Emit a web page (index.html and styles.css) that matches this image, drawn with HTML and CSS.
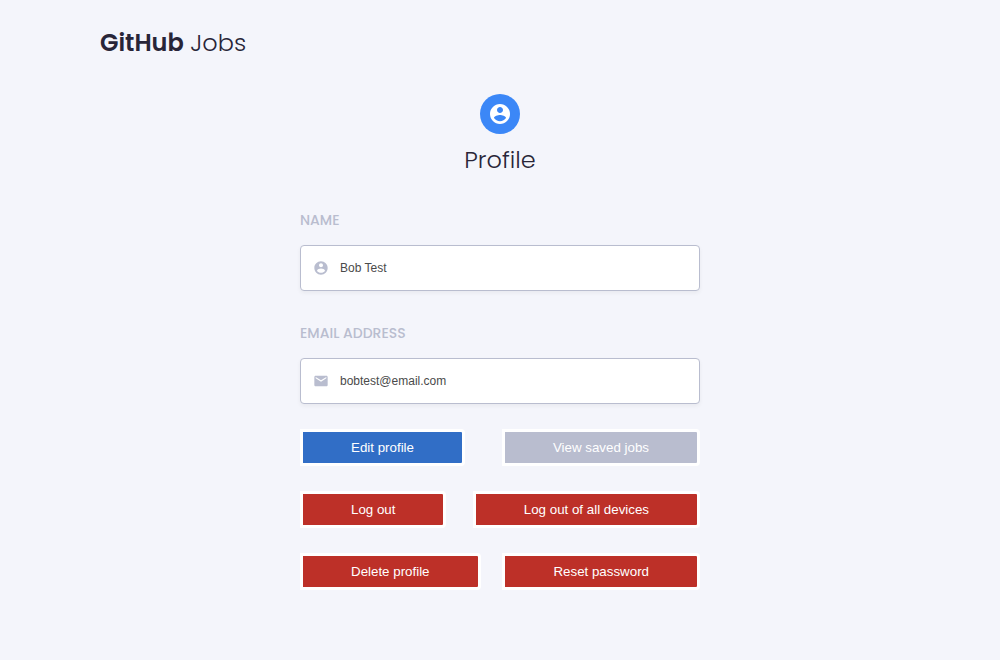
FILE: index.html
```html
<!DOCTYPE html>
<html lang="en">
<head>
<meta charset="utf-8">
<meta name="viewport" content="width=device-width, initial-scale=1">
<title>GitHub Jobs - Profile</title>
<link rel="stylesheet" href="styles.css">
</head>
<body>
<div class="page">
  <header class="header">
    <a class="logo" href="#"><strong class="logo-name">GitHub</strong> Jobs</a>
  </header>
  <main class="profile">
    <div class="profile-heading">
      <span class="avatar">
        <svg class="avatar-icon" viewBox="2 2 20 20" aria-hidden="true"><path d="M12 2C6.480 2 2 6.480 2 12s4.480 10 10 10 10-4.480 10-10S17.520 2 12 2zm0 3c1.660 0 3 1.340 3 3s-1.340 3-3 3-3-1.340-3-3 1.340-3 3-3zm0 14.200c-2.500 0-4.710-1.280-6-3.220.03-1.990 4-3.080 6-3.080 1.990 0 5.970 1.090 6 3.080-1.290 1.940-3.500 3.220-6 3.220z"/></svg>
      </span>
      <h1 class="title">Profile</h1>
    </div>
    <form class="form">
      <div class="field">
        <label class="label" for="name">NAME</label>
        <div class="control">
          <svg class="control-icon" viewBox="0 0 24 24" aria-hidden="true"><path d="M12 2C6.480 2 2 6.480 2 12s4.480 10 10 10 10-4.480 10-10S17.520 2 12 2zm0 3c1.660 0 3 1.340 3 3s-1.340 3-3 3-3-1.340-3-3 1.340-3 3-3zm0 14.200c-2.500 0-4.710-1.280-6-3.220.03-1.990 4-3.080 6-3.080 1.990 0 5.970 1.090 6 3.080-1.290 1.940-3.500 3.220-6 3.220z"/></svg>
          <input class="input" id="name" type="text" value="Bob Test" readonly>
        </div>
      </div>
      <div class="field">
        <label class="label" for="email">EMAIL ADDRESS</label>
        <div class="control">
          <svg class="control-icon" viewBox="0 0 24 24" aria-hidden="true"><path d="M20 4H4c-1.100 0-1.990.9-1.990 2L2 18c0 1.100.9 2 2 2h16c1.100 0 2-.9 2-2V6c0-1.100-.9-2-2-2zm0 4l-8 5-8-5V6l8 5 8-5v2z"/></svg>
          <input class="input" id="email" type="email" value="bobtest@email.com" readonly>
        </div>
      </div>
      <div class="actions">
        <div class="action-row">
          <button class="button button-primary" type="button">Edit profile</button>
          <button class="button button-muted" type="button">View saved jobs</button>
        </div>
        <div class="action-row">
          <button class="button button-danger" type="button">Log out</button>
          <button class="button button-danger" type="button">Log out of all devices</button>
        </div>
        <div class="action-row">
          <button class="button button-danger" type="button">Delete profile</button>
          <button class="button button-danger" type="button">Reset password</button>
        </div>
      </div>
    </form>
  </main>
</div>
</body>
</html>
```
FILE: styles.css
```css
*, *::before, *::after {
  box-sizing: border-box;
}

body {
  margin: 0;
  background: #f4f5fb;
  color: #282538;
  font-family: Poppins, Inter, sans-serif;
}

.page {
  width: 80%;
  margin: 0 auto;
  padding: 25px 0;
}

.header {
  display: flex;
}

.logo {
  color: inherit;
  font-size: 24px;
  font-weight: 300;
  line-height: 36px;
  text-decoration: none;
}

.logo-name {
  font-weight: 600;
}

.profile {
  max-width: 400px;
  margin: 33px auto 0;
}

.profile-heading {
  display: flex;
  flex-direction: column;
  align-items: center;
  gap: 8px;
}

.avatar {
  display: flex;
  align-items: center;
  justify-content: center;
  width: 40px;
  height: 40px;
  border-radius: 50%;
  background: #3b87f7;
}

.avatar-icon {
  width: 20px;
  height: 20px;
  fill: #fff;
}

.title {
  margin: 0;
  font-size: 24px;
  font-weight: 300;
  line-height: 36px;
}

.form {
  display: flex;
  flex-direction: column;
  gap: 25px;
  margin-top: 32px;
}

.field {
  display: flex;
  flex-direction: column;
  gap: 15px;
  padding-bottom: 7px;
}

.field + .field {
  padding-bottom: 0;
}

.label {
  color: #b9bdcf;
  font-size: 14px;
  font-weight: 500;
  line-height: 20px;
}

.control {
  display: flex;
  align-items: center;
  gap: 11px;
  padding: 0 12px;
  border: 1px solid #b9bdcf;
  border-radius: 4px;
  background: #fff;
  box-shadow: 0 2px 4px rgba(0, 0, 0, 0.05);
}

.control-icon {
  flex: none;
  width: 16px;
  height: 16px;
  fill: #b9bdcf;
}

.input {
  flex: 1;
  min-width: 0;
  padding: 14px 0;
  border: 0;
  outline: 0;
  background: none;
  color: #4a4a4a;
  font: 12px/16px "Liberation Sans", Arial, sans-serif;
}

.actions {
  display: flex;
  flex-direction: column;
  gap: 25px;
}

.action-row {
  display: flex;
  justify-content: space-between;
}

.button {
  padding: 8px 48px;
  border: 3px solid #fff;
  border-radius: 0 4px 4px 0;
  color: #fff;
  font-family: "Liberation Sans", Arial, sans-serif;
  line-height: 15px;
  cursor: pointer;
}

.button-primary {
  background: #316ec6;
}

.button-muted {
  background: #b9bdcf;
}

.button-danger {
  background: #bd3028;
}
```
